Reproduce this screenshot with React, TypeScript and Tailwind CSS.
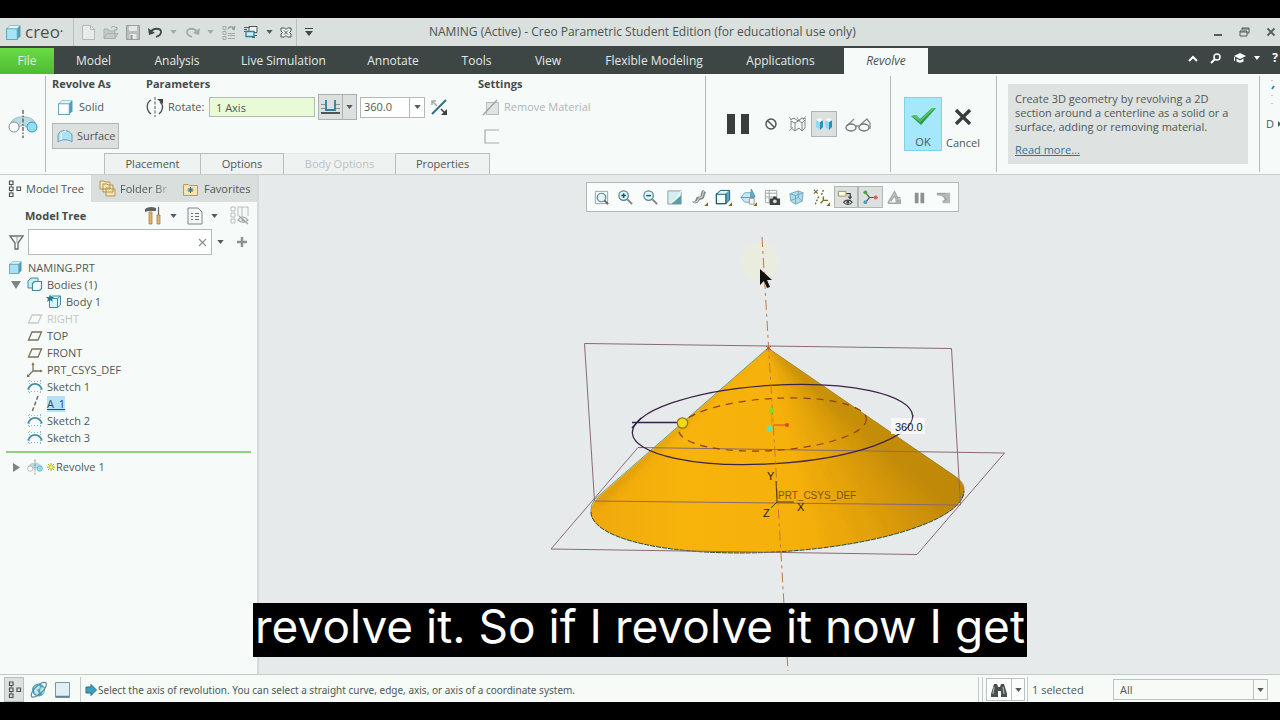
import type { ReactNode } from 'react';
import clsx from 'clsx';

const RIBBON_TABS = [
  { label: 'Model', width: 'w-[79px]' },
  { label: 'Analysis', width: 'w-[88px]' },
  { label: 'Live Simulation', width: 'w-[125px]' },
  { label: 'Annotate', width: 'w-[94px]' },
  { label: 'Tools', width: 'w-[73px]' },
  { label: 'View', width: 'w-[70px]' },
  { label: 'Flexible Modeling', width: 'w-[142px]' },
  { label: 'Applications', width: 'w-[111px]' },
];

const PANEL_TABS = [
  { label: 'Placement', width: 'w-[97px]' },
  { label: 'Options', width: 'w-[83px]' },
  { label: 'Body Options', width: 'w-[112px]', disabled: true },
  { label: 'Properties', width: 'w-[94px]' },
];

type IconProps = { w?: number; h?: number; box?: string; children: ReactNode };

function Icon({ w = 16, h = 16, box, children }: IconProps) {
  return (
    <svg width={w} height={h} viewBox={box ?? `0 0 ${w} ${h}`} fill="none" className="shrink-0" aria-hidden="true">
      {children}
    </svg>
  );
}

function Caret({ className = 'text-[#555b59]' }: { className?: string }) {
  return (
    <svg width="7" height="4" viewBox="0 0 8 5" className={clsx('shrink-0', className)} aria-hidden="true">
      <path d="M0 0h8L4 5z" fill="currentColor" />
    </svg>
  );
}

function CubeIcon({ fill = '#a5e4f7', size = 14 }: { fill?: string; size?: number }) {
  return (
    <Icon w={size} h={size} box="0 0 14 14">
      <path d="M.5 3.500l3-3h10v10l-3 3H.5z" fill="#4f9dba" />
      <path d="M.5 3.500h10v10H.5z" fill={fill} stroke="#6aa5ba" />
      <path d="M1.500 3l2-2h9l-2 2z" fill="#e2f7fd" />
    </Icon>
  );
}

function TreeGlyph({ color = '#4c5452' }: { color?: string }) {
  return (
    <Icon w={14} h={18}>
      <g stroke={color} strokeWidth="1.200">
        <path d="M1.500 1h3.500v3.500H1.500zM1.500 7h3.500v3.500H1.500zM1.500 13h3.500v3.500H1.500zM9 7h3.500v3.500H9z" />
        <path d="M3.250 4.500V7M3.250 10.500V13" strokeWidth=".8" />
      </g>
    </Icon>
  );
}

function RevolveIcon({ w, h }: { w: number; h: number }) {
  return (
    <Icon w={w} h={h} box="0 0 30 30">
      <path d="M2 16C4 5 26 5 28 16l-8 3c-2-3-8-3-10 0z" fill="#b9dbe4" stroke="#8aa7ae" strokeWidth=".7" />
      <circle cx="6" cy="18" r="5" fill="#fff" stroke="#81908f" />
      <circle cx="24" cy="18" r="5" fill="#8be0fa" stroke="#3f94b3" />
      <path d="M15 1v28" stroke="#454b4a" strokeWidth="1.200" strokeDasharray="4 1.500 1.500 1.500" />
    </Icon>
  );
}

function TitleBar() {
  return (
    <header className="flex h-7 shrink-0 items-center bg-[#d9e0dd] text-[#4b5350]">
      <div className="flex w-[74px] items-center gap-1 self-stretch border-r border-[#b9c1be] pl-1.5">
        <CubeIcon size={15} />
        <span className="text-[17px] leading-5">creo<sup className="text-[8px]">•</sup></span>
      </div>
      <div className="flex min-w-0 flex-1 items-center">
        <div className="flex w-[223px] shrink-0 items-center justify-between self-stretch border-r border-[#b9c1be] py-1.5 pr-1 pl-2">
          <button aria-label="New">
            <Icon w={13} h={15}><path d="M.5.5h8l4 4v10H.5z" fill="#e7ebea" stroke="#b4bab8" /><path d="M8.500.5v4h4" stroke="#b4bab8" /></Icon>
          </button>
          <button aria-label="Open">
            <Icon w={16} h={15}><path d="M1 13.500V4h4l1 2h6v7.500zM1 13.500l3-5h11l-3 5z" fill="#c5cbc9" stroke="#a7aeac" /><path d="M8 3c1-2 4-2 5 0l1-1v3h-3" stroke="#999f9d" /></Icon>
          </button>
          <button aria-label="Save">
            <Icon w={14} h={15}><path d="M.5.5h13v14H.5z" fill="#b9bebd" stroke="#989f9d" /><path d="M3 1h8v5H3zM3.500 9h7v5h-7z" fill="#e4e8e7" /><path d="M4.500 10h2v4h-2z" fill="#8e9593" /></Icon>
          </button>
          <button aria-label="Undo">
            <Icon w={15} h={13}><path d="M2 7c3-6 11-5 11-1 0 2-2 4-5 5" stroke="#414846" strokeWidth="1.800" /><path d="M0 2l1 7 6-2z" fill="#414846" /></Icon>
          </button>
          <Caret className="text-[#a3aaa8]" />
          <button aria-label="Redo">
            <Icon w={15} h={13}><path d="M13 7C10 1 2 2 2 6c0 2 2 4 5 5" stroke="#a3aaa8" strokeWidth="1.800" /><path d="M15 2l-1 7-6-2z" fill="#a3aaa8" /></Icon>
          </button>
          <Caret className="text-[#a3aaa8]" />
          <button aria-label="Regenerate">
            <Icon w={14} h={15}><path d="M1 1.500h3v3H1zM1 6.500h3v3H1zM1 11.500h3v3H1zM6 8.500h7M6 10.500h7M6 13.500h7" stroke="#a3aaa8" /><path d="M6 4c1-3 5-3 6 0l1-3M10 4h3" stroke="#969d9b" strokeWidth="1.300" /></Icon>
          </button>
          <button aria-label="Windows">
            <Icon w={15} h={14}><path d="M6 1.500h8v6H6z" fill="#eef3f2" stroke="#4d5a58" /><path d="M1 2.500h6M1 4.500h3M1 6.500h3M9 10.500h5M9 12.500h3" stroke="#4d5a58" /><path d="M3 6.500h8v5H3z" fill="#d5f0f8" stroke="#2f7f9b" strokeWidth="1.300" /></Icon>
          </button>
          <Caret />
          <button aria-label="Close window">
            <Icon w={12} h={11}><path d="M1 1h3.500L6 2.500 7.500 1H11v3L9.500 5.500 11 7v3H7.500L6 8.500 4.500 10H1V7l1.500-1.500L1 4z" fill="#eef2f1" stroke="#4b5350" /><path d="M4 3.500l4 4M8 3.500l-4 4" stroke="#4b5350" /></Icon>
          </button>
        </div>
        <button className="ml-2" aria-label="Customize toolbar">
          <Icon w={8} h={8}><path d="M0 .5h8" stroke="#414846" /><path d="M0 3h8L4 8z" fill="#414846" /></Icon>
        </button>
        <h1 className="ml-[116px] truncate text-[12px] leading-4">NAMING (Active) - Creo Parametric Student Edition (for educational use only)</h1>
      </div>
      <div className="flex items-center gap-4 pr-1 pl-4">
        <button aria-label="Minimize"><Icon w={10} h={10}><path d="M1 8h8" stroke="#555c5a" strokeWidth="2" /></Icon></button>
        <button aria-label="Restore"><Icon w={11} h={10}><path d="M3 3V1h7v5H8M1 4h7v5H1zM1 5h7M3 2h7" stroke="#555c5a" /></Icon></button>
        <button aria-label="Close"><Icon w={10} h={10}><path d="M1.500 1.500l7 7M8.500 1.500l-7 7" stroke="#555c5a" strokeWidth="1.800" /></Icon></button>
      </div>
    </header>
  );
}

function RibbonTabs() {
  return (
    <nav className="flex h-7 shrink-0 items-end bg-[#3d4644] pt-0.5 text-[12px] leading-4 text-[#e4e9e7]">
      <button className="h-full w-[54px] shrink-0 bg-linear-to-b from-[#6bdb45] to-[#4dbb32]">File</button>
      {RIBBON_TABS.map(tab => (
        <button key={tab.label} className={clsx('h-full shrink-0 whitespace-nowrap', tab.width)}>{tab.label}</button>
      ))}
      <button className="ml-2 h-full w-[84px] shrink-0 bg-[#f6fbf9] text-[#4b5350] italic">Revolve</button>
      <div className="ml-auto flex items-center gap-3 self-center pb-1.5">
        <button aria-label="Collapse ribbon"><Icon w={10} h={7}><path d="M1 6l4-4 4 4" stroke="#fff" strokeWidth="2" /></Icon></button>
        <button aria-label="Search"><Icon w={12} h={12}><circle cx="7" cy="5" r="3" stroke="#fff" strokeWidth="1.500" /><path d="M5 7l-4 4" stroke="#fff" strokeWidth="2" /></Icon></button>
        <button aria-label="Learning" className="flex items-center gap-2">
          <Icon w={12} h={10}><path d="M0 3l6-3 6 3-6 3z" fill="#fff" /><path d="M2.500 5.500v3c2 1.500 5 1.500 7 0v-3L6 7.500zM0 4h1v4H0z" fill="#fff" /></Icon>
          <Icon w={6} h={4}><path d="M0 0h6L3 4z" fill="#fff" /></Icon>
        </button>
        <button aria-label="Help" className="pr-0.5 font-bold text-white">?</button>
      </div>
    </nav>
  );
}

function GroupTitle({ children }: { children: ReactNode }) {
  return <h2 className="text-[11px] leading-4 font-bold text-[#454c4a]">{children}</h2>;
}

function Divider() {
  return <div className="my-0.5 w-px shrink-0 bg-[#b3b9b7]" />;
}

function Ribbon() {
  return (
    <section className="flex h-[101px] shrink-0 overflow-hidden border-b border-[#c8cecc] bg-[#f6fbf9] text-[11px] leading-4 text-[#505856]">
      <div className="flex w-[45px] shrink-0 items-center justify-center">
        <RevolveIcon w={30} h={30} />
      </div>
      <Divider />
      <div className="flex min-w-[659px] flex-1 flex-col justify-between">
        <div className="flex pt-0.5 pl-1.5">
          <div className="w-[94px] shrink-0">
            <GroupTitle>Revolve As</GroupTitle>
            <button className="mt-[3px] flex h-6 items-center gap-1.5 px-1.5">
              <CubeIcon fill="#ffffff" size={15} />Solid
            </button>
            <button className="mt-1 flex h-[26px] w-[67px] items-center gap-1 border border-[#b1b7b5] bg-[#dce1df] pl-1">
              <Icon w={16} h={14}><path d="M1 13V6c2-6 11-6 14 0v7c-4-3-10-3-14 0z" fill="#a9e3f5" stroke="#6a9fb2" /><path d="M4 11V5c1-2 3-3 5-3" stroke="#fff" /></Icon>
              Surface
            </button>
          </div>
          <div className="w-[332px] shrink-0">
            <GroupTitle>Parameters</GroupTitle>
            <div className="mt-0.5 flex h-[26px] items-center">
              <Icon w={18} h={20}><path d="M5 3C0 6 0 13 5 17M13 17c4-3 5-9 1-12" stroke="#505856" strokeWidth="1.400" /><path d="M9 0v20" stroke="#505856" strokeDasharray="3 1.500" /><path d="M11 2h6v5z" fill="#3b4240" /></Icon>
              <label htmlFor="axis" className="w-[45px] pl-1">Rotate:</label>
              <input id="axis" defaultValue="1 Axis" className="h-5 w-[106px] border border-[#b3b9b7] bg-[#e7fbd6] px-1.5 outline-none" />
              <div className="ml-[3px] flex h-[26px] w-[39px] border border-[#a9b0ae] bg-[#dce1df]">
                <button aria-label="Depth type" className="flex flex-1 items-center justify-center border-r border-[#a9b0ae]">
                  <Icon w={19} h={16}><path d="M0 5.500h6M13 5.500h6M0 9.500h6M13 9.500h6" stroke="#8b9391" /><path d="M5 1v10h9V1" stroke="#32809b" strokeWidth="1.800" /><path d="M0 14h19" stroke="#3f4745" strokeWidth="1.800" /></Icon>
                </button>
                <button aria-label="Depth options" className="flex w-[13px] items-center justify-center"><Caret /></button>
              </div>
              <div className="ml-[3px] flex h-[21px] w-[65px] border border-[#b3b9b7] bg-white">
                <input aria-label="Angle" defaultValue="360.0" className="min-w-0 flex-1 px-[3px] outline-none" />
                <button aria-label="Recent angles" className="flex w-[15px] items-center justify-center border-l border-[#b3b9b7]"><Caret /></button>
              </div>
              <button aria-label="Flip direction" className="ml-1.5">
                <Icon w={17} h={17}><path d="M1 15L15 1" stroke="#2f7185" strokeWidth="2" /><path d="M1 6V2h4M2 3l4 4" stroke="#a3aaa8" strokeWidth="1.500" /><path d="M16 10v6h-6z" fill="#3b4240" /><path d="M10 10l5 5" stroke="#3b4240" strokeWidth="1.500" /></Icon>
              </button>
            </div>
          </div>
          <div className="shrink-0">
            <GroupTitle>Settings</GroupTitle>
            <button disabled className="mt-[3px] flex h-6 items-center gap-1 pl-1 text-[#b0b6b4]">
              <Icon w={18} h={17}><path d="M4.500 3.500h12v12h-12z" fill="#dfe3e2" stroke="#b7bcba" /><path d="M1 16L15 1" stroke="#9ca2a0" strokeWidth="1.200" /></Icon>
              Remove Material
            </button>
            <button disabled aria-label="Thicken sketch" className="mt-2.5 block pl-1.5">
              <Icon w={16} h={15}><path d="M15 1H1v13h14" stroke="#a5abaa" strokeWidth="1.200" /></Icon>
            </button>
          </div>
        </div>
        <div className="flex pl-[58px]">
          {PANEL_TABS.map((tab, i) => (
            <button
              key={tab.label}
              disabled={tab.disabled}
              className={clsx(
                'h-[21px] border-t border-r border-[#b8bebc] bg-[#eef2f1]',
                tab.width,
                i === 0 && 'border-l',
                tab.disabled && 'border-t-[#e3e8e6] text-[#bcc2c0]'
              )}
            >
              {tab.label}
            </button>
          ))}
        </div>
      </div>
      <Divider />
      <div className="flex w-[184px] shrink-0 items-center pl-[21px]">
        <button aria-label="Pause"><Icon w={22} h={20}><path d="M0 0h8v20H0zM14 0h8v20h-8z" fill="#373e3c" /></Icon></button>
        <button aria-label="No preview" className="ml-4"><Icon w={12} h={12}><circle cx="6" cy="6" r="5" stroke="#4b5350" strokeWidth="1.400" /><path d="M2.500 2.500l7 7" stroke="#4b5350" strokeWidth="1.400" /></Icon></button>
        <button aria-label="Unattached preview" className="ml-3">
          <Icon w={18} h={16}>
            <path d="M1 4l4-2 4 3 4-3 4 1" stroke="#717977" />
            <path d="M2 5v7l4 3 4-3 3 3 3-3V4M6 7v8M6 7L2 5M6 7l5-3M13 7v8M13 7l3-3M13 7l-4-3" stroke="#717977" strokeWidth=".9" />
            <path d="M0 1l3 3M0 15l4-4M8 1l2 4M17 0l-3 4" stroke="#8b9391" strokeWidth=".8" />
          </Icon>
        </button>
        <button aria-label="Attached preview" className="ml-1 flex size-[26px] items-center justify-center border border-[#b1b7b5] bg-[#dce1df]">
          <Icon w={18} h={14}><path d="M1 3l4 2v8l-4-3zM10 3l4 2v8l-4-3z" fill="#8bdcf5" /><path d="M5 5l3-2v7l-3 3zM14 5l3-2v7l-3 3z" fill="#2f8fb5" /><path d="M1 3l4-2 3 2-3 2zM10 3l4-2 3 2-3 2z" fill="#f5feff" /></Icon>
        </button>
        <button aria-label="Verify" className="ml-2"><Icon w={27} h={15}><path d="M2 9l7-7M15 8l7-6 3 4v6" stroke="#858c8a" strokeWidth="1.300" /><ellipse cx="6" cy="10.500" rx="5" ry="3.500" stroke="#717977" strokeWidth="1.400" /><ellipse cx="19" cy="10.500" rx="5" ry="3.500" stroke="#717977" strokeWidth="1.400" /><path d="M11 9h3" stroke="#717977" strokeWidth="1.300" /></Icon></button>
      </div>
      <Divider />
      <div className="flex w-[105px] shrink-0 items-center pl-[13px]">
        <button className="flex h-[54px] w-[38px] flex-col items-center justify-between border border-[#7fd2ea] bg-[#a5e7fb] pt-2">
          <Icon w={27} h={20}>
            <path d="M1 10l5-1 4 4L22 2h4L11 19z" fill="#2f9a49" />
            <path d="M2 10l4-1 4 5L22 2h3L10 16z" fill="#58c469" />
          </Icon>
          OK
        </button>
        <button className="ml-1 flex h-[54px] flex-col items-center justify-between pt-3">
          <Icon w={18} h={16}><path d="M2 1l14 14M16 1L2 15" stroke="#373e3c" strokeWidth="3.400" /></Icon>
          Cancel
        </button>
      </div>
      <Divider />
      <div className="flex w-[262px] shrink-0 items-center pl-[11px]">
        <div className="flex h-20 w-60 flex-col justify-between bg-[#dee2e1] px-[7px] pt-2 pb-[7px] leading-[14px] whitespace-nowrap">
          <p>Create 3D geometry by revolving a 2D<br />section around a centerline as a solid or a<br />surface, adding or removing material.</p>
          <a href="#help" className="self-start text-[#34729c] underline">Read more...</a>
        </div>
      </div>
      <Divider />
      <div className="flex w-5 shrink-0 flex-col pt-1 pl-1.5">
        <Icon w={10} h={30}><path d="M6 2v1M6 17v1M6 25v1" stroke="#8d9593" /><path d="M6 11l2-3" stroke="#3e8ba4" strokeWidth="2" /></Icon>
        <span className="mt-2 flex items-center gap-1">D<Icon w={3} h={6}><path d="M0 0l3 3-3 3z" fill="#505856" /></Icon></span>
      </div>
    </section>
  );
}

const PlaneIcon = ({ color = '#7c7058' }: { color?: string }) => (
  <Icon w={16} h={12}><path d="M5 2h9.500L11 10H1.500z" stroke={color} strokeWidth="1.300" /></Icon>
);

const SketchIcon = () => (
  <Icon w={16} h={15}>
    <path d="M1 2.500h14M1 12.500h14M2.500 1v13M13.500 1v13" stroke="#8dbccb" strokeDasharray="1 2" />
    <path d="M1 10.500C4 3 12 3 15 10.500" stroke="#3e8ba4" strokeWidth="1.800" />
  </Icon>
);

const TREE: { label: string; icon: ReactNode; depth?: number; open?: boolean; faded?: boolean; selected?: boolean }[] = [
  { label: 'Bodies (1)', open: true, icon: <Icon w={16} h={15}><path d="M1 4l3-3h7v8l-2 2H1z" fill="#c7edf7" stroke="#3e8ba4" /><path d="M5.500 6.500l2-2h7v7l-2 2h-7z" fill="#f7feff" stroke="#3e8ba4" strokeWidth="1.200" /></Icon> },
  { label: 'Body 1', depth: 1, icon: <Icon w={16} h={15}><path d="M3.500 4.500h8v9h-8zM4 4l2-2h8.500v9l-3 2.500M11.500 4.500l3-2.500" fill="#d9f5fc" stroke="#3e8ba4" /><path d="M4 0l1 3h3L6 5l1 3-3-2-3 2 1-3-2-2h3z" fill="#237c94" /></Icon> },
  { label: 'RIGHT', icon: <PlaneIcon color="#cdc9c0" />, faded: true },
  { label: 'TOP', icon: <PlaneIcon /> },
  { label: 'FRONT', icon: <PlaneIcon /> },
  { label: 'PRT_CSYS_DEF', icon: <Icon w={16} h={15}><path d="M6 2v7l-5 5M6 9h8" stroke="#7c7058" strokeWidth="1.300" /><path d="M4.500 3L6 0l1.500 3zM13 7.500L16 9l-3 1.500zM0 15v-3l3 3z" fill="#7c7058" /></Icon> },
  { label: 'Sketch 1', icon: <SketchIcon /> },
  { label: 'A_1', selected: true, icon: <Icon w={16} h={16}><path d="M11 0L5 16" stroke="#7c7058" strokeWidth="1.500" strokeDasharray="4 2" /></Icon> },
  { label: 'Sketch 2', icon: <SketchIcon /> },
  { label: 'Sketch 3', icon: <SketchIcon /> },
];

function ModelTree() {
  return (
    <aside className="flex w-[259px] shrink-0 flex-col border-r-2 border-[#d5dad9] bg-[#f6fbf9] text-[11px] leading-4 text-[#505856]">
      <div className="flex h-[27px] items-stretch bg-[#d9dfdd]">
        <button className="flex w-[91px] items-center gap-1 bg-[#f6fbf9] pl-2 whitespace-nowrap"><TreeGlyph />Model Tree</button>
        <button className="flex w-[92px] items-center gap-1 pl-2 whitespace-nowrap">
          <Icon w={17} h={17}><path d="M1 1h4l1 1h5v7H1zM4 4h4l1 1h5v7H4zM7 8h4l1 1h4v7H7z" fill="#f7e3ae" stroke="#a98d52" strokeWidth=".9" /></Icon>
          <span className="mask-r-from-75% mask-r-to-110%">Folder Br</span>
        </button>
        <button className="flex items-center gap-1.5"><Icon w={15} h={14}><path d="M.5 2.500h5l1 1h8v10H.5z" fill="#f7e3ae" stroke="#b79c62" /><path d="M7.500 5v6M4.500 8h6M5.500 6l4 4M9.500 6l-4 4" stroke="#2f6f8c" /></Icon>Favorites</button>
      </div>
      <div className="flex h-[27px] items-center pr-2 pl-[25px]">
        <h2 className="flex-1 font-bold text-[#454c4a]">Model Tree</h2>
        <button aria-label="Settings" className="flex items-center gap-2">
          <Icon w={17} h={19}><path d="M4 6h3v12H4z" fill="#e5b469" stroke="#9b7740" strokeWidth=".7" /><path d="M0 3c3-2 6-3 11-1v3H3L0 6z" fill="#5b6361" /><path d="M13.500 1v8" stroke="#69716f" strokeWidth="1.300" /><path d="M12 9h3v9h-3z" fill="#e5b469" stroke="#9b7740" strokeWidth=".7" /></Icon>
          <Caret />
        </button>
        <button aria-label="Show" className="ml-2.5 flex items-center gap-2">
          <Icon w={16} h={18}><path d="M1 1h10l4 4v12H1z" fill="#f7faf9" stroke="#7d8583" /><path d="M4 6.500h2M4 9.500h2M4 12.500h2M8 6.500h4M8 9.500h4M8 12.500h4" stroke="#69716f" /></Icon>
          <Caret />
        </button>
        <button aria-label="Hide columns" className="ml-3">
          <Icon w={19} h={19}><path d="M1 1h4v4H1zM1 7h4v4H1zM1 13h4v4H1zM8 1h10v9M12 1v10M8 1v9" stroke="#b8bebc" /><path d="M8 14c3-4 7-4 10 0-3 3-7 3-10 0zM9 10l9 8" stroke="#9fa6a4" strokeWidth="1.200" /><circle cx="13" cy="14" r="1.500" fill="#9fa6a4" /></Icon>
        </button>
      </div>
      <div className="flex h-[26px] items-center pl-[9px]">
        <Icon w={15} h={15}><path d="M1 1h13L9 8v6H6V8z" stroke="#656d6b" strokeWidth="1.300" /><path d="M8 8V2l5-1" stroke="#9aa19f" /></Icon>
        <div className="ml-1 flex h-[26px] w-[184px] items-center border border-[#b3b9b7] bg-white pr-1">
          <input aria-label="Filter tree" className="min-w-0 flex-1 px-1 outline-none" />
          <button aria-label="Clear filter"><Icon w={9} h={9}><path d="M1 1l7 7M8 1L1 8" stroke="#8b9391" strokeWidth="1.300" /></Icon></button>
        </div>
        <button aria-label="Filter options" className="ml-[5px]"><Caret /></button>
        <button aria-label="Add filter" className="ml-3"><Icon w={12} h={12}><path d="M6 1v10M1 6h10" stroke="#8b9391" strokeWidth="2.500" /></Icon></button>
      </div>
      <ul className="pt-1 whitespace-nowrap">
        <li className="flex h-[17px] items-center gap-1.5 pl-[9px]"><CubeIcon size={13} />NAMING.PRT</li>
        {TREE.map(item => (
          <li key={item.label} className={clsx('flex h-[17px] items-center', item.depth ? 'pl-[46px]' : 'pl-[11px]', item.faded && 'text-[#c3c7c5]')}>
            {!item.depth && (
              <span className="w-4 shrink-0">{item.open && <Icon w={10} h={8}><path d="M0 0h10L5 8z" fill="#7d8583" /></Icon>}</span>
            )}
            {item.icon}
            <span className={clsx('ml-1', item.selected && 'bg-[#b5e3f3] text-[#2f4e5c] underline')}>{item.label}</span>
          </li>
        ))}
      </ul>
      <div className="mx-1.5 mt-[5px] h-0.5 shrink-0 bg-[#8fd07c]" />
      <div className="mt-[5px] flex h-[18px] items-center pl-[13px]">
        <Icon w={7} h={9}><path d="M0 0l7 4.500L0 9z" fill="#7d8583" /></Icon>
        <span className="ml-[7px] flex"><RevolveIcon w={16} h={16} /></span>
        <span className="ml-1 flex"><Icon w={8} h={8}><path d="M1 1l6 6M7 1L1 7M4 0v8M0 4h8" stroke="#9aa818" /><path d="M2.500 2.500h3v3h-3z" fill="#f1f53a" /></Icon></span>
        <span className="ml-px">Revolve 1</span>
      </div>
    </aside>
  );
}

const CORNER = 'M14 18h4v-4z';

const VIEW_TOOLS: { label: string; active?: boolean; art: ReactNode }[] = [
  { label: 'Refit', art: <><path d="M2.500 2.500h13v13h-13z" stroke="#9aa19f" /><circle cx="9" cy="9" r="4.500" fill="#e6f7fc" stroke="#5c8796" strokeWidth="1.300" /><path d="M12 12l4 4" stroke="#5b6361" strokeWidth="2" /></> },
  { label: 'Zoom In', art: <><circle cx="7" cy="7" r="5" fill="#e6f7fc" stroke="#4e8799" strokeWidth="1.300" /><path d="M7 4.500v5M4.500 7h5" stroke="#1d5467" strokeWidth="1.600" /><path d="M11 11l5 5" stroke="#8b7f76" strokeWidth="2" /></> },
  { label: 'Zoom Out', art: <><circle cx="7" cy="7" r="5" fill="#e6f7fc" stroke="#4e8799" strokeWidth="1.300" /><path d="M4.500 7h5" stroke="#1d5467" strokeWidth="1.600" /><path d="M11 11l5 5" stroke="#8b7f76" strokeWidth="2" /></> },
  { label: 'Repaint', art: <><path d="M2 2h14v14H2z" fill="#d6edf2" stroke="#899f9f" /><path d="M5 16h11V7c-3 3-6 4-11 9z" fill="#5b9cac" /><path d="M16 2c-2 5-6 10-11 13" stroke="#f3f6ee" strokeWidth="1.500" /></> },
  { label: 'Rendering', art: <><path d="M1 13c5 2 3-5 7-5 4 1 1-5 5-7l3 3c-3 2 0 6-5 7-3 0-3 5-8 4z" fill="#7e8684" /><path d="M3 14c5 1 4-5 7-5 4 0 1-4 4-7" stroke="#cdd2d0" strokeWidth="1.200" /><path d={CORNER} fill="#7b6a2d" /></> },
  { label: 'Display Style', art: <><path d="M1.500 5.500l4-4h10v10l-4 4h-10z" fill="#5ba7be" stroke="#285b6c" /><path d="M1.500 5.500h10v10h-10z" fill="#f4fcfe" stroke="#285b6c" strokeWidth="1.300" /><path d="M3 5l3-3h8l-3 3z" fill="#d7f3fb" /><path d={CORNER} fill="#7b6a2d" /></> },
  { label: 'Saved Orientations', art: <><path d="M1 9l4-5h7l3 5-3 5H5z" fill="#c3ebf6" stroke="#6ca9bb" /><path d="M12 0l4 8h-5zM1 9h14" fill="#5cb3cb" stroke="#5b9caf" /><path d="M10 10h5v6h-5z" fill="#f4f4f1" stroke="#a29c90" /><path d={CORNER} fill="#7b6a2d" /></> },
  { label: 'View Manager', art: <><path d="M1.500 1.500h12v13h-12zM1.500 4.500h12M1.500 8.500h12M5.500 1.500v13" stroke="#a0a7a5" /><path d="M6 10h3l1-2h3l1 2h3v7H6z" fill="#3d4543" /><circle cx="11.500" cy="13" r="2" fill="#d6dbda" /></> },
  { label: 'Perspective', art: <><path d="M2 5l9-3 5 2-1 9-7 3-5-3z" fill="#a9dcec" stroke="#7da9b8" /><path d="M2 5l6 2v9M8 7l8-3M3 12l8-3V2M11 9l4 4" stroke="#6c9db0" strokeWidth=".8" /></> },
  { label: 'Datum Display', art: <><path d="M1 1l4 4M5 1L1 5" stroke="#7b6a2d" strokeWidth="1.200" /><path d="M11 1L9 6M6 8l-4 9" stroke="#7b6a2d" strokeWidth="1.500" strokeDasharray="2 1.500" /><path d="M11 8v4l-3 3M11 12h5" stroke="#7b6a2d" strokeWidth="1.400" /><path d={CORNER} fill="#7b6a2d" /></> },
  { label: 'Annotation Display', active: true, art: <><path d="M1.500 2.500h8v5h-8z" fill="#fffbe7" stroke="#a18e5f" /><path d="M10 5h4v5" stroke="#3d4543" strokeWidth="1.300" /><path d="M11 8l3 3 2-3z" fill="#3d4543" /><path d="M7 14c2-3 7-3 9 0-2 3-7 3-9 0z" stroke="#3d4543" strokeWidth="1.300" /><circle cx="11.500" cy="14" r="1.500" fill="#3d4543" /></> },
  { label: 'Spin Center', active: true, art: <><path d="M4 4l4 5-4 5M8 9h6" stroke="#545c5a" strokeWidth="1.300" /><circle cx="3.500" cy="3.500" r="2" fill="#45a845" /><circle cx="3.500" cy="14" r="2" fill="#4c9fc1" /><circle cx="14.500" cy="9" r="2.200" fill="#dc625f" /></> },
  { label: 'Simulate', art: <><path d="M2 15L9 3l4 8M2 15h9M5 13l4-6 2 4" stroke="#9fa6a4" strokeWidth="1.500" /><path d="M10 11h6v5h-6z" fill="#a9afad" /><path d="M12 11V9h3v2" stroke="#9fa6a4" /></> },
  { label: 'Pause', art: <path d="M4 4h4v11H4zM10 4h4v11h-4z" fill="#8b9391" /> },
  { label: 'Playback', art: <><path d="M2 4h14v11H8v-3h2c0-4-4-5-8-5z" fill="#b4bab8" /><path d="M2 5h9M9 8l3 3-3 2" stroke="#8f9694" /></> },
];

function ViewToolbar() {
  return (
    <div className="relative flex justify-center pt-[7px] pl-1.5">
      <div className="flex h-[30px] w-[373px] items-center border border-[#b3b9b7] bg-[#f8fcfb] px-0.5" role="toolbar">
        {VIEW_TOOLS.map(tool => (
          <button
            key={tool.label}
            aria-label={tool.label}
            className={clsx('flex h-[22px] flex-1 items-center justify-center border', tool.active ? 'border-[#b1b7b5] bg-[#dce1df]' : 'border-transparent')}
          >
            <Icon w={17} h={17} box="0 0 18 18">{tool.art}</Icon>
          </button>
        ))}
      </div>
    </div>
  );
}

// Wedges fan out from the apex; stacking them darkens the side turned away from the light.
const SHADE_STEPS = [830, 865, 900, 930, 955, 980, 1000];

function ModelScene() {
  return (
    <svg className="absolute inset-0 size-full" viewBox="259 174 1021 499" fill="none" role="img" aria-label="Cone preview">
      <defs>
        <linearGradient id="cone" x1="591" y1="0" x2="964" y2="0" gradientUnits="userSpaceOnUse">
          <stop offset="0" stopColor="#f0a80c" />
          <stop offset=".25" stopColor="#f7b40b" />
          <stop offset=".55" stopColor="#f6b00a" />
          <stop offset="1" stopColor="#e9a20c" />
        </linearGradient>
        <clipPath id="cone-clip">
          <ellipse cx="777.5" cy="500.5" rx="187" ry="50.300" transform="rotate(-3.470 777.5 500.5)" />
          <path d="M768 347L958 477L780 510L596 498z" />
        </clipPath>
        <filter id="soft" x="-20%" y="-20%" width="140%" height="140%"><feGaussianBlur stdDeviation="3" /></filter>
      </defs>
      <circle cx="760" cy="260" r="19" fill="#efecd8" opacity=".6" />
      <g clipPath="url(#cone-clip)">
        <path d="M580 340h400v220H580z" fill="url(#cone)" />
        <g filter="url(#soft)">
          {SHADE_STEPS.map(x => (
            <path key={x} d={`M766 343L${x} 560L1060 540z`} fill="#6b4700" opacity=".05" />
          ))}
          <path d="M768 345L590 500l-6 8 20-5z" fill="#8a5b00" opacity=".15" />
        </g>
      </g>
      <path d="M768 347L595 498Q590 504 591 511" stroke="#6fa07c" strokeWidth="1" />
      <path d="M768 347L957 477Q965 482 964 490" stroke="#a08030" strokeWidth=".8" />
      <path d="M591 511A186.800 50.300 -3.470 0 0 964 490" stroke="#1d4a43" strokeWidth="1" strokeDasharray="5 1" />
      <g stroke="#8a6a70" strokeWidth="1">
        <path d="M584.500 342.500L951.500 347.500L960.500 504L594.500 500z" />
        <path d="M638 446.500L1004.500 452L917 553.500L551 548z" />
      </g>
      <ellipse cx="772.5" cy="423.5" rx="140.400" ry="39.200" transform="rotate(-3.540 772.5 423.5)" stroke="#3d2347" strokeWidth="1.300" />
      <ellipse cx="772.5" cy="423.500" rx="94" ry="26" transform="rotate(-3.500 772.5 423.5)" stroke="#8f3d12" strokeWidth="1.200" strokeDasharray="7 6" />
      <path d="M762 236L788 670" stroke="#bd7a42" strokeDasharray="10 4 3 4" />
      <path d="M766 345l5 4M771 345l-5 4" stroke="#c73a2a" />
      <path d="M632 421.500h46M632 427l9-10" stroke="#332046" strokeWidth="1.300" />
      <circle cx="682.500" cy="422" r="5.200" fill="#f3d91b" stroke="#8d7a10" strokeWidth="1.300" />
      <path d="M771.500 410v14" stroke="#6fc82e" strokeWidth=".8" />
      <circle cx="771.500" cy="409.500" r="2.500" fill="#7be01e" />
      <path d="M773 424h13" stroke="#d2491d" />
      <circle cx="787" cy="424" r="2" fill="#dd4a1d" />
      <circle cx="769.500" cy="427.500" r="3" fill="#62e3ae" />
      <path d="M891 417h34v16h-34z" fill="#f8f7fb" opacity=".9" />
      <path d="M913 414q-1 10-9 16" stroke="#3d2347" />
      <path d="M776 480l1 21M777 501l-6 6M777 501h17" stroke="#4f3a14" />
      <g fontFamily="'Liberation Sans', Arial, sans-serif" fontSize="11" fill="#221d1d">
        <text x="895" y="430">360.0</text>
        <text x="767" y="479">Y</text>
        <text x="763" y="516">Z</text>
        <text x="797" y="510">X</text>
        <text x="778" y="498" fill="#7a5212" fontSize="10">PRT_CSYS_DEF</text>
      </g>
      <path d="M760 268v16l4-4 3 7 3-1-3-7h5z" fill="#111" />
    </svg>
  );
}

function StatusBar() {
  return (
    <footer className="flex h-7 shrink-0 items-center border-t border-[#c3cac7] bg-[#f6fbf7] pt-0.5 text-[11px] leading-4 text-[#505856]">
      <button aria-label="Navigator" className="ml-1 flex h-[25px] w-5 items-center justify-center border border-[#b9bfbd] bg-[#dce1df] pt-px pl-0.5"><TreeGlyph /></button>
      <button aria-label="Web browser" className="ml-1.5">
        <Icon w={17} h={18}><circle cx="8.500" cy="9" r="6.500" fill="#4ba4cb" /><path d="M5 5l4-1 1 3-3 2 2 3-2 2c-3-2-4-6-2-9zM11 6l3 1v4l-2 2-2-3z" fill="#c5e6e0" /><path d="M2 16C-2 12 12-2 16 2c2 4-8 15-14 14z" stroke="#5b8a9d" strokeWidth="1.200" /></Icon>
      </button>
      <button aria-label="Full screen" className="ml-2"><Icon w={15} h={16}><path d="M.5.5h14v15H.5z" fill="#e2eff2" stroke="#7d979f" /><path d="M1 14.500h13" stroke="#5e838f" strokeWidth="1.500" /></Icon></button>
      <div className="ml-2.5 h-full w-px bg-[#c3cac7]" />
      <p className="ml-1 flex min-w-0 flex-1 items-center gap-px font-['Noto_Sans',sans-serif] text-[10px] whitespace-nowrap">
        <Icon w={12} h={12}><path d="M1 3h5V0.500l5.500 5.500L6 11.500V9H1z" fill="#3ca0c2" stroke="#2b6f88" /></Icon>
        Select the axis of revolution. You can select a straight curve, edge, axis, or axis of a coordinate system.
      </p>
      <div className="mr-[3px] h-full w-[5px] border-x border-[#c3cac7]" />
      <div className="flex h-[23px] w-[39px] border border-[#bcc2c0] bg-[#fbfdfc]">
        <button aria-label="Find" className="flex flex-1 items-center justify-center">
          <Icon w={16} h={16}><path d="M3 2h3l1 3h2l1-3h3l3 10v3h-6V9H7v6H0v-3z" fill="#4a504e" /><path d="M3 5L2 12M12 5l1 7" stroke="#a9b0ae" strokeWidth="1.300" /></Icon>
        </button>
        <button aria-label="Find options" className="flex w-[13px] items-center justify-center border-l border-[#bcc2c0]"><Caret /></button>
      </div>
      <span className="ml-0.5 flex h-full w-[86px] items-center border-l border-[#c3cac7] pl-1">1 selected</span>
      <div className="mr-3 flex h-[21px] w-[155px] items-center border border-[#bcc2c0] bg-[#f8faf7]">
        <select aria-label="Selection filter" className="h-full min-w-0 flex-1 appearance-none px-1.5 outline-none"><option>All</option></select>
        <span className="flex h-full w-3.5 items-center justify-center border-l border-[#bcc2c0]"><Caret /></span>
      </div>
    </footer>
  );
}

export default function App() {
  return (
    <div className="relative flex h-screen flex-col overflow-hidden bg-black pt-[18px] pb-[18px] font-['Open_Sans','Noto_Sans',sans-serif]">
      <TitleBar />
      <RibbonTabs />
      <Ribbon />
      <main className="flex min-h-0 flex-1">
        <ModelTree />
        <section className="relative min-w-0 flex-1 bg-[#e7eaeb]">
          <ModelScene />
          <ViewToolbar />
        </section>
      </main>
      <StatusBar />
      <div className="pointer-events-none absolute inset-x-0 bottom-[63px] flex justify-center">
        <p className="h-[54px] bg-black px-0.5 font-['Inter',sans-serif] text-[46px] leading-[46px] whitespace-nowrap text-white">
          revolve it. So if I revolve it now I get
        </p>
      </div>
    </div>
  );
}
